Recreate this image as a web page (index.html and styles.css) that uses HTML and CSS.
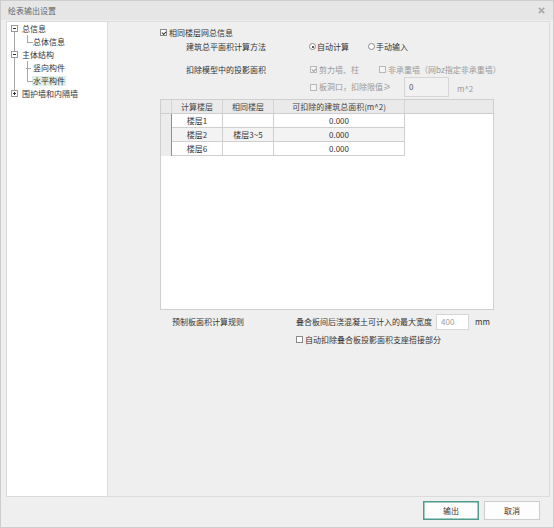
FILE: index.html
```html
<!DOCTYPE html>
<html lang="zh">
<head>
<meta charset="utf-8">
<title>绘表输出设置</title>
<link rel="stylesheet" href="styles.css">
</head>
<body>
<div class="window">
  <div class="titlebar">
    <span class="title">绘表输出设置</span>
    <svg class="close" width="7" height="7" viewBox="0 0 7 7"><path d="M0.8 0.8L6.2 6.2M6.2 0.8L0.8 6.2" stroke="#ababab" stroke-width="1.7"/></svg>
  </div>
  <div class="main">
    <div class="tree">
      <div class="node n1 first">
        <svg class="exp" width="7" height="7" viewBox="0 0 7 7"><rect x="0.5" y="0.5" width="6" height="6" fill="#fff" stroke="#9a9a9a"/><path d="M2 3.5H5" stroke="#333"/></svg>
        <span class="lbl">总信息</span>
      </div>
      <div class="node n2 lastchild"><span class="lbl">总体信息</span></div>
      <div class="node n1 mid">
        <svg class="exp" width="7" height="7" viewBox="0 0 7 7"><rect x="0.5" y="0.5" width="6" height="6" fill="#fff" stroke="#9a9a9a"/><path d="M2 3.5H5" stroke="#333"/></svg>
        <span class="lbl">主体结构</span>
      </div>
      <div class="node n2"><span class="lbl">竖向构件</span></div>
      <div class="node n2 lastchild"><span class="lbl sel">水平构件</span></div>
      <div class="node n1 last">
        <svg class="exp" width="7" height="7" viewBox="0 0 7 7"><rect x="0.5" y="0.5" width="6" height="6" fill="#fff" stroke="#9a9a9a"/><path d="M2 3.5H5M3.5 2V5" stroke="#333"/></svg>
        <span class="lbl">围护墙和内隔墙</span>
      </div>
    </div>
    <div class="panel">
      <div class="row r1">
        <span class="cb checked"></span><span>相同楼层网总信息</span>
      </div>
      <div class="row r2">
        <span class="label">建筑总平面积计算方法</span>
        <span class="opt o-radio"><span class="rd on"></span><span>自动计算</span></span>
        <span class="opt"><span class="rd"></span><span>手动输入</span></span>
      </div>
      <div class="row r3">
        <span class="label">扣除模型中的投影面积</span>
        <span class="opt o-wall dis"><span class="cb checked dis"></span><span>剪力墙、柱</span></span>
        <span class="opt dis"><span class="cb dis"></span><span>非承重墙（网bz指定非承重墙）</span></span>
      </div>
      <div class="row r4">
        <span class="opt o-hole dis"><span class="cb dis"></span><span>板洞口，扣除限值≥</span></span>
        <span class="input inp-dis">0</span>
        <span class="unit dis">m^2</span>
      </div>
      <div class="table">
        <div class="thead">
          <div class="th corner"></div>
          <div class="th">计算楼层</div>
          <div class="th">相同楼层</div>
          <div class="th">可扣除的建筑总面积(m^2)</div>
          <div class="th fill"></div>
        </div>
        <div class="tr">
          <div class="rh"></div>
          <div class="td">楼层1</div>
          <div class="td"></div>
          <div class="td">0.000</div>
        </div>
        <div class="tr alt">
          <div class="rh"></div>
          <div class="td">楼层2</div>
          <div class="td">楼层3~5</div>
          <div class="td">0.000</div>
        </div>
        <div class="tr">
          <div class="rh"></div>
          <div class="td">楼层6</div>
          <div class="td"></div>
          <div class="td">0.000</div>
        </div>
      </div>
      <div class="row r5">
        <span class="label2">预制板面积计算规则</span>
        <span class="desc">叠合板间后浇混凝土可计入的最大宽度</span>
        <span class="input inp-w">400</span>
        <span class="unit2">mm</span>
      </div>
      <div class="row r6">
        <span class="cb"></span><span>自动扣除叠合板投影面积支座搭接部分</span>
      </div>
    </div>
  </div>
  <div class="footer">
    <button class="btn primary">输出</button>
    <button class="btn">取消</button>
  </div>
</div>
</body>
</html>
```
FILE: styles.css
```css
* { box-sizing: border-box; }
html, body { margin: 0; padding: 0; }
body {
  font-family: "Noto Sans CJK SC", "Noto Sans", sans-serif;
  font-size: 8px;
  color: #333;
  background: #f0f0f0;
}
.window {
  width: 554px;
  height: 528px;
  border: 1px solid #cdcdcd;
  background: #efefef;
  display: flex;
  flex-direction: column;
}
.titlebar {
  height: 19px;
  flex: none;
  background: #e6e6e6;
  display: flex;
  align-items: center;
  justify-content: space-between;
  padding: 0 8px 0 7px;
  color: #666;
}
.title { line-height: 1; }
.close { display: block; }
.main {
  flex: none;
  height: 476px;
  margin: 1px 3px 0 5px;
  display: flex;
}
.tree {
  width: 102px;
  flex: none;
  background: #fff;
  border: 1px solid #dadada;
}
.node {
  position: relative;
  height: 13px;
  display: flex;
  align-items: center;
  line-height: 1;
  color: #333;
}
.n1 { padding-left: 4px; }
.n1 .exp { position: relative; z-index: 1; margin-right: 4px; display: block; }
.n2 { padding-left: 26px; }
.lbl { white-space: nowrap; }
.sel { background: #ddefea; padding: 1px 1px; margin-left: -1px; }
.node::before, .node::after { content: ""; position: absolute; }
.n1.first::before { left: 7px; top: 7px; bottom: 0; border-left: 1px solid #a8a8a8; }
.n1.mid::before { left: 7px; top: 0; bottom: 0; border-left: 1px solid #a8a8a8; }
.n1.last::before { left: 7px; top: 0; height: 6px; border-left: 1px solid #a8a8a8; }
.n2::before { left: 7px; top: 0; bottom: 0; border-left: 1px solid #a8a8a8; }
.n2::after { left: 20px; top: 0; bottom: 0; width: 5px; border-left: 1px solid #a8a8a8; }
.n2 .lbl { position: relative; }
.n2.lastchild::after { bottom: auto; height: 7px; border-bottom: 1px solid #a8a8a8; }
.n2:not(.lastchild) .lbl::before {
  content: ""; position: absolute; left: -7px; top: 50%; width: 5px; border-top: 1px solid #a8a8a8;
}
.panel {
  flex: 1;
  border: 1px solid #dcdcdc;
  border-left: none;
  padding: 5px 0 0 52px;
  display: flex;
  flex-direction: column;
}
.row {
  display: flex;
  align-items: center;
  height: 11px;
  line-height: 1;
  white-space: nowrap;
}
.cb {
  width: 7px; height: 7px;
  border: 1px solid #8a8a8a;
  background: #fff;
  flex: none;
  margin-right: 2px;
  position: relative;
}
.cb.checked::after {
  content: "";
  position: absolute;
  left: 1px; top: 0px;
  width: 3px; height: 2px;
  border-left: 1px solid #333;
  border-bottom: 1px solid #333;
  transform: rotate(-45deg);
  transform-origin: 50% 50%;
  margin-top: 1px;
}
.cb.dis { border-color: #b8b8b8; background: #f4f4f4; }
.cb.checked.dis::after { border-color: #9a9a9a; }
.rd {
  width: 7px; height: 7px;
  border: 1px solid #8a8a8a;
  border-radius: 50%;
  background: #fff;
  flex: none;
  margin-right: 1px;
  position: relative;
}
.rd.on::after {
  content: "";
  position: absolute;
  left: 1.5px; top: 1.5px;
  width: 2px; height: 2px;
  border-radius: 50%;
  background: #222;
}
.dis { color: #9a9a9a; }
.opt { display: flex; align-items: center; }
.r2 { margin-top: 3px; padding-left: 26px; }
.label { width: 123px; flex: none; }
.o-radio { width: 59px; }
.r3 { margin-top: 12px; padding-left: 26px; }
.r3 .label { width: 124px; }
.o-wall { width: 69px; }
.r4 { margin-top: 2px; height: 20px; padding-left: 150px; }
.o-hole { width: 94px; }
.input {
  height: 20px;
  border: 1px solid #d6d6d6;
  padding: 5px 0 0 4px;
  line-height: 1;
  flex: none;
}
.inp-dis { width: 45px; background: #f1f1f1; color: #555; align-self: stretch; }
.unit { margin-left: 8px; padding-top: 3px; }
.table {
  margin-top: 2px;
  width: 334px;
  height: 211px;
  border: 1px solid #cfcfcf;
  background: #fff;
  flex: none;
}
.thead {
  display: grid;
  grid-template-columns: 11px 51px 51px 131px 1fr;
  height: 14px;
  background: #eaeaea;
  border-bottom: 1px solid #cdcdcd;
}
.th {
  border-right: 1px solid #d4d4d4;
  text-align: center;
  line-height: 13px;
  color: #444;
}
.th.fill { border-right: none; }
.tr {
  display: grid;
  grid-template-columns: 11px 51px 51px 131px;
  height: 14px;
}
.rh {
  background: #ececec;
  border-right: 1px solid #8f8f8f;
}
.td {
  border-right: 1px solid #cfcfcf;
  border-bottom: 1px solid #cfcfcf;
  text-align: center;
  line-height: 13px;
  color: #333;
}
.tr.alt .td { background: #f3f3f3; }
.r5 { margin-top: 4px; height: 16px; padding-left: 12px; }
.label2 { width: 124px; flex: none; }
.desc { width: 140px; flex: none; }
.inp-w { width: 33px; height: 16px; background: #fff; color: #999; padding: 3px 0 0 4px; }
.unit2 { margin-left: 6px; }
.r6 { margin-top: 4px; padding-left: 136px; }
.footer {
  flex: 1;
  display: flex;
  justify-content: flex-end;
  align-items: flex-start;
  padding: 4px 13px 0 0;
  gap: 5px;
}
.btn {
  width: 56px;
  height: 19px;
  font-family: "Noto Sans CJK SC", "Noto Sans", sans-serif;
  font-size: 8px;
  color: #333;
  background: #fdfdfd;
  border: 1px solid #cdcdcd;
  padding: 0;
  line-height: 1;
}
.btn.primary { border: 1px solid #4f9c8c; box-shadow: inset 0 0 0 0.5px #4f9c8c; }
```
